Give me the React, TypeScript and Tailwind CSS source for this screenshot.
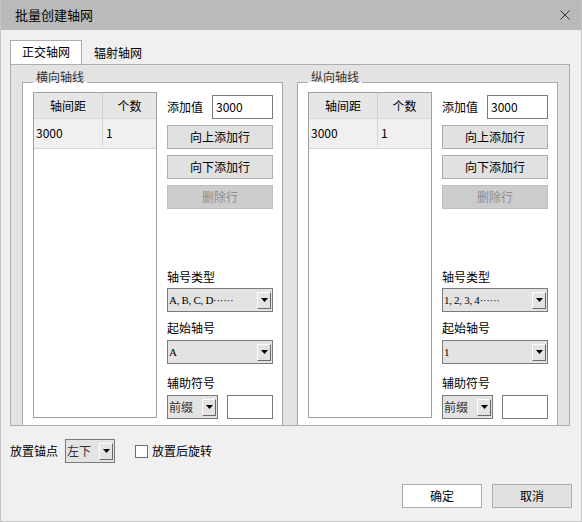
import React from 'react';

const sans = "font-['Noto_Sans_CJK_SC','Noto_Sans',sans-serif]";
const serif = "font-['Liberation_Serif','Noto_Sans_CJK_SC',serif]";

function Arrow() {
  return (
    <span className="flex h-[17px] w-[14px] shrink-0 items-center justify-center border border-t-white border-l-white border-r-[#696969] border-b-[#696969] bg-[#e3e3e3]">
      <svg width="7" height="4" viewBox="0 0 7 4">
        <path d="M0 0h7L3.5 4z" fill="#000" />
      </svg>
    </span>
  );
}

function Combo({ width, children, mono }: { width: string; children: React.ReactNode; mono?: boolean }) {
  return (
    <div className={`${width} flex h-[24px] shrink-0 items-center justify-between border border-[#7a7a7a] bg-[#e3e3e3] pr-[1px]`}>
      <span className={mono ? `${serif} pl-[1px] text-[11px] tracking-[-0.3px] text-black` : 'pl-[1px] text-[12px] text-[#333]'}>
        {children}
      </span>
      <Arrow />
    </div>
  );
}

function Btn({ children, disabled }: { children: React.ReactNode; disabled?: boolean }) {
  return (
    <button
      className={
        disabled
          ? 'mt-[6px] h-[24px] w-[106px] border border-[#bfbfbf] bg-[#cccccc] text-[12px] text-[#8d8d8d]'
          : 'mt-[6px] h-[24px] w-[106px] border border-[#adadad] bg-[#e1e1e1] text-[12px] text-black'
      }
    >
      {children}
    </button>
  );
}

function AxisGroup({ title, typeText, startText }: { title: string; typeText: string; startText: string }) {
  return (
    <fieldset className="h-[360px] w-[261px] min-w-0 shrink-0 border border-[#a9a9a9] bg-white pl-[10px] pr-[9px] pt-[2px]">
      <legend className="relative -top-[5px] px-[3px] text-[12px] leading-[16px] text-[#333]">{title}</legend>
      <div className="flex">
        {/* spacing table */}
        <div className="flex h-[326px] w-[124px] shrink-0 flex-col border border-[#a0a0a0] bg-white text-[12px]">
          <div className="flex h-[26px] border-b border-[#d5d5d5] bg-[#e6e6e6]">
            <div className="flex w-[69px] items-center justify-center border-r border-[#d0d0d0]">轴间距</div>
            <div className="flex flex-1 items-center justify-center">个数</div>
          </div>
          <div className="flex h-[30px] border-b border-[#d5d5d5] bg-[#f0f0f0] pb-[2px]">
            <div className="flex w-[69px] items-center border-r border-[#d5d5d5] pl-[2px]">3000</div>
            <div className="flex flex-1 items-center pl-[3px]">1</div>
          </div>
        </div>

        <div className="ml-[10px] flex w-[106px] flex-col">
          <div className="mt-[3px] flex h-[24px] items-center">
            <span className="w-[45px] text-[12px]">添加值</span>
            <div className="flex h-[24px] w-[61px] items-center border border-[#7a7a7a] bg-white pl-[3px] text-[12px]">3000</div>
          </div>
          <Btn>向上添加行</Btn>
          <Btn>向下添加行</Btn>
          <Btn disabled>删除行</Btn>

          <span className="mt-[60px] text-[12px] leading-[16px]">轴号类型</span>
          <div className="mt-[3px]">
            <Combo width="w-[106px]" mono>{typeText}</Combo>
          </div>
          <span className="mt-[8px] text-[12px] leading-[16px]">起始轴号</span>
          <div className="mt-[4px]">
            <Combo width="w-[106px]" mono>{startText}</Combo>
          </div>
          <span className="mt-[11px] text-[12px] leading-[16px]">辅助符号</span>
          <div className="mt-[4px] flex items-center">
            <Combo width="w-[51px]">前缀</Combo>
            <div className="ml-[9px] h-[24px] w-[46px] border border-[#7a7a7a] bg-white" />
          </div>
        </div>
      </div>
    </fieldset>
  );
}

export default function App() {
  return (
    <div className={`${sans} flex h-[522px] w-[582px] flex-col border-x border-b border-[#c4c4c4] bg-[#f0f0f0] text-black`}>
      <div className="flex h-[30px] shrink-0 items-center justify-between bg-[#bababa] pl-[14px] pr-[10px]">
        <span className="text-[13px]">批量创建轴网</span>
        <svg width="10" height="10" viewBox="0 0 10 10" className="mr-[1px]">
          <path d="M0.5 0.5l9 9M9.5 0.5l-9 9" stroke="#333" strokeWidth="1" />
        </svg>
      </div>

      <div className="flex flex-col pl-[9px] pt-[10px]">
        <div className="flex text-[12px]">
          <div className="relative z-10 -mb-px flex h-[24px] w-[72px] items-center justify-center border border-b-0 border-[#adadad] bg-white pb-[1px]">
            正交轴网
          </div>
          <div className="flex h-[24px] w-[72px] items-center justify-center pt-[1px]">辐射轴网</div>
        </div>
        <div className="flex h-[362px] w-[560px] gap-[14px] overflow-hidden border border-[#adadad] bg-[#e3e3e3] pl-[11px] pt-[9px]">
          <AxisGroup title="横向轴线" typeText="A, B, C, D······" startText="A" />
          <AxisGroup title="纵向轴线" typeText="1, 2, 3, 4······" startText="1" />
        </div>

        <div className="mt-[13px] flex h-[24px] items-center text-[12px]">
          <span className="w-[55px]">放置锚点</span>
          <Combo width="w-[50px]">左下</Combo>
          <span className="ml-[20px] h-[13px] w-[13px] border border-[#6d6d6d] bg-white" />
          <span className="ml-[4px]">放置后旋转</span>
        </div>

        <div className="mt-[21px] flex justify-end gap-[10px] pr-[9px] text-[12px]">
          <button className="h-[24px] w-[80px] border border-[#adadad] bg-white">确定</button>
          <button className="h-[24px] w-[80px] border border-[#adadad] bg-[#e1e1e1]">取消</button>
        </div>
      </div>
    </div>
  );
}
